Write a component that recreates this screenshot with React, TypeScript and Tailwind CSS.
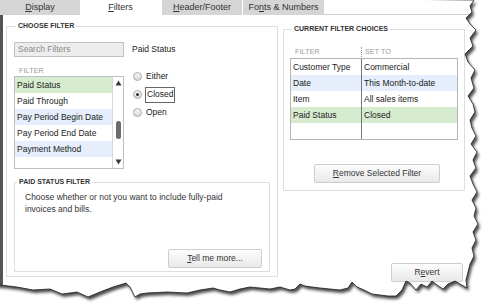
import React from "react";

const listItems = [
  { label: "Paid Status", bg: "bg-[#d7ebcf]" },
  { label: "Paid Through", bg: "bg-white" },
  { label: "Pay Period Begin Date", bg: "bg-[#e5eefa]" },
  { label: "Pay Period End Date", bg: "bg-white" },
  { label: "Payment Method", bg: "bg-[#e5eefa]" },
];

const choices = [
  { filter: "Customer Type", value: "Commercial", bg: "bg-white" },
  { filter: "Date", value: "This Month-to-date", bg: "bg-[#e5eefa]" },
  { filter: "Item", value: "All sales items", bg: "bg-white" },
  { filter: "Paid Status", value: "Closed", bg: "bg-[#d7ebcf]" },
];

const rightEdge = [
  [474, 0], [470, 6], [472, 12], [466, 18], [470, 24], [476, 30], [470, 38], [473, 46],
  [465, 54], [468, 62], [475, 70], [471, 78], [474, 88], [468, 96], [473, 104], [475, 112],
  [470, 120], [472, 128], [476, 136], [471, 144], [477, 152], [473, 160], [476, 168], [470, 176],
  [473, 184], [477, 192], [472, 200], [476, 208], [474, 216], [478, 224], [473, 232], [476, 240],
  [472, 248], [474, 256], [470, 264], [468, 272], [466, 280], [467, 288],
];

const bottomEdge = [
  [460, 284], [455, 281], [448, 284], [443, 289], [437, 285], [432, 281], [427, 287], [421, 284],
  [416, 290], [410, 283], [406, 281], [402, 290], [396, 296], [388, 296], [380, 295], [372, 294],
  [364, 290], [357, 287], [352, 282], [348, 288], [340, 290], [330, 289], [320, 288], [312, 287],
  [305, 286], [300, 284], [295, 289], [290, 290], [280, 287], [270, 289], [260, 288], [250, 287],
  [240, 289], [230, 292], [220, 290], [213, 288], [200, 290], [187, 293], [167, 292], [147, 293],
  [140, 294], [135, 297], [130, 287], [126, 283], [123, 284], [113, 287], [100, 292], [88, 297],
  [77, 292], [62, 294], [50, 289], [33, 290], [17, 287], [0, 285], [-5, 285],
];

const pagePath =
  "M-5,-5 " +
  [...rightEdge, ...bottomEdge].map(([x, y]) => `L${x},${y}`).join(" ") +
  " Z";

function TornEdge() {
  return (
    <svg className="absolute inset-0 pointer-events-none" width="490" height="306" viewBox="0 0 490 306">
      <defs>
        <filter id="blur" x="-10%" y="-10%" width="120%" height="120%">
          <feGaussianBlur stdDeviation="1.8" />
        </filter>
        <mask id="outside">
          <rect x="0" y="0" width="490" height="306" fill="white" />
          <path d={pagePath} fill="black" />
        </mask>
      </defs>
      <path d={"M0,0 H490 V306 H0 Z " + pagePath} fill="white" fillRule="evenodd" />
      <g mask="url(#outside)">
        <path d={pagePath} fill="#2a2a2a" transform="translate(2,3)" filter="url(#blur)" opacity="0.85" />
      </g>
      <path d={pagePath} fill="none" stroke="#1e1e1e" strokeWidth="0.8" />
    </svg>
  );
}

function Radio({ checked }: { checked?: boolean }) {
  return (
    <span className="w-[9px] h-[9px] rounded-full border border-[#a8a8a8] bg-gradient-to-b from-[#f6f6f6] to-[#d9d9d9] flex items-center justify-center">
      {checked && <span className="w-[3px] h-[3px] rounded-full bg-[#333]" />}
    </span>
  );
}

function Button({ children, className }: { children: React.ReactNode; className: string }) {
  return (
    <div
      className={
        "h-[19px] shrink-0 flex items-center justify-center rounded-[2px] border border-[#cdcdcd] bg-gradient-to-b from-[#fdfdfd] to-[#e9e9e9] text-[8.5px] text-[#333] " +
        className
      }
    >
      {children}
    </div>
  );
}

function Legend({ children }: { children: React.ReactNode }) {
  return (
    <legend className="ml-[2px] px-[2px] text-[7px] leading-[8px] font-bold text-[#333]">{children}</legend>
  );
}

export default function App() {
  return (
    <div className="w-[490px] h-[306px] relative overflow-hidden bg-white text-[#222] font-['Liberation_Sans',Arial,sans-serif]">
      {/* tabs */}
      <div className="flex h-[15px] text-[9px] text-[#333]">
        <div className="w-[80px] bg-[#d5d5d5] flex items-center justify-center">
          <span><span className="underline">D</span>isplay</span>
        </div>
        <div className="w-[81px] bg-white flex items-center justify-center">
          <span><span className="underline">F</span>ilters</span>
        </div>
        <div className="w-[80px] ml-[1px] bg-[#d5d5d5] flex items-center justify-center">
          <span><span className="underline">H</span>eader/Footer</span>
        </div>
        <div className="w-[81px] ml-[1px] bg-[#d5d5d5] flex items-center justify-center">
          <span>Fo<span className="underline">n</span>ts &amp; Numbers</span>
        </div>
        <div className="flex-1 border-b border-[#d0d0d0]" />
      </div>

      {/* body */}
      <div className="flex h-[270px] border-l-[3px] border-[#555]">
        {/* choose filter */}
        <fieldset className="ml-[3px] mt-[7px] mb-[8px] w-[272px] border border-[#dedede] px-[7px]">
          <Legend>CHOOSE FILTER</Legend>
          <div className="flex mt-[12px]">
            <div className="w-[110px] flex flex-col">
              <div className="h-[15px] border border-[#c2c2c2] bg-[#ededed] text-[8.5px] text-[#8c8c8c] flex items-center pl-[3px]">
                Search Filters
              </div>
              <div className="mt-[9px] ml-[5px] text-[7px] leading-[10px] text-[#9a9a9a] tracking-[0.2px]">FILTER</div>
              <div className="mt-[0px] h-[93px] border border-[#bfbfbf] flex bg-white">
                <div className="flex-1 flex flex-col">
                  {listItems.map((it) => (
                    <div key={it.label} className={"h-[16px] flex items-center pl-[2px] text-[8.5px] " + it.bg}>
                      {it.label}
                    </div>
                  ))}
                </div>
                <div className="w-[11px] border-l border-[#d8d8d8] flex flex-col items-center py-[3px]">
                  <svg width="7" height="6" viewBox="0 0 7 6"><path d="M3.5 0.5 L6.5 5.5 H0.5 Z" fill="#3a3a3a" /></svg>
                  <div className="w-[5px] h-[18px] rounded-[3px] bg-[#6b6b6b] mt-[35px]" />
                  <div className="flex-1" />
                  <svg width="7" height="6" viewBox="0 0 7 6"><path d="M0.5 0.5 H6.5 L3.5 5.5 Z" fill="#3a3a3a" /></svg>
                </div>
              </div>
            </div>
            <div className="ml-[8px] flex flex-col text-[8.5px]">
              <div className="mt-[1px]">Paid Status</div>
              <div className="mt-[13px] flex flex-col gap-[2px]">
                <div className="h-[16px] flex items-center gap-[3px] ml-[1px]">
                  <Radio />
                  <span className="px-[1px]">Either</span>
                </div>
                <div className="h-[16px] flex items-center gap-[3px] ml-[1px]">
                  <Radio checked />
                  <span className="px-[1px] h-[16px] border border-[#666] flex items-center">Closed</span>
                </div>
                <div className="h-[16px] flex items-center gap-[3px] ml-[1px]">
                  <Radio />
                  <span className="px-[1px]">Open</span>
                </div>
              </div>
            </div>
          </div>

          <fieldset className="mt-[9px] w-[256px] h-[94px] border border-[#dedede]">
            <Legend>PAID STATUS FILTER</Legend>
            <p className="mt-[5px] ml-[10px] text-[8.5px] leading-[12px] text-[#333]">
              Choose whether or not you want to include fully-paid
              <br />
              invoices and bills.
            </p>
            <div className="mt-[34px] flex justify-end pr-[7px]">
              <Button className="w-[94px]">
                <span><span className="underline">T</span>ell me more...</span>
              </Button>
            </div>
          </fieldset>
        </fieldset>

        {/* current filter choices */}
        <div className="ml-[5px] w-[182px] flex flex-col">
          <fieldset className="mt-[10px] h-[166px] border border-[#dedede] px-[6px]">
            <Legend>CURRENT FILTER CHOICES</Legend>
            <div className="mt-[14px] flex text-[7px] leading-[10px] text-[#9a9a9a] tracking-[0.2px]">
              <span className="w-[71px] pl-[5px]">FILTER</span>
              <span className="border-l border-dotted border-[#999] pl-[3px]">SET TO</span>
            </div>
            <div className="mt-[1px] h-[82px] border border-[#b5b5b5] flex flex-col text-[8.5px] bg-white">
              {choices.map((c) => (
                <div key={c.filter} className={"h-[16px] flex " + c.bg}>
                  <div className="w-[71px] pl-[2px] flex items-center border-r border-[#777]">{c.filter}</div>
                  <div className="flex-1 pl-[2px] flex items-center">{c.value}</div>
                </div>
              ))}
              <div className="flex-1 flex">
                <div className="w-[71px] border-r border-[#777]" />
              </div>
            </div>
            <div className="mt-[24px] flex justify-center pl-[6px]">
              <Button className="w-[126px]">
                <span><span className="underline">R</span>emove Selected Filter</span>
              </Button>
            </div>
          </fieldset>
          <Button className="mt-auto mb-[3px] self-end mr-[2px] w-[72px]">
            <span>R<span className="underline">e</span>vert</span>
          </Button>
        </div>
      </div>

      <TornEdge />
    </div>
  );
}
